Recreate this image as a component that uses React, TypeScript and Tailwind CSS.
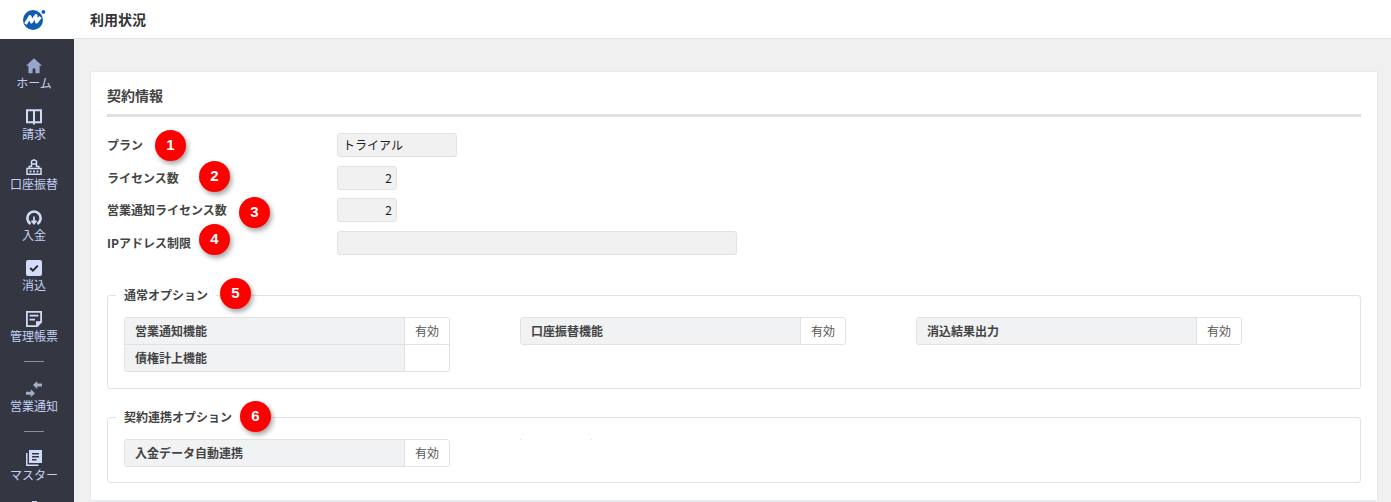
import type { ReactNode } from "react";

const NAV_TOP = [
  {
    label: "ホーム",
    icon: <path fill="#98a6cb" d="M8 0.3 0 7.8h2.4v7.4h4.2v-4.8h2.8v4.8h4.2V7.8H16z" />,
  },
  {
    label: "請求",
    icon: <path fill="none" stroke="#d0dbf8" strokeWidth="2" d="M1 1.2h14v12H1zM8 1.2V15.6" />,
  },
  {
    label: "口座振替",
    icon: (
      <g fill="none" stroke="#d0dbf8" strokeWidth="1.5">
        <path d="M5.5 8V2.2L8 .8l2.5 1.4V8M5.5 4.9h5" />
        <path d="M5.5 7.6H3.2v2M10.5 7.6h2.3v2" />
        <path d="M1 15.2V9.6h14v5.6z" />
        <path strokeWidth="1.8" d="M3.6 12.5h1.8M7.1 12.5h1.8M10.6 12.5h1.8" />
      </g>
    ),
  },
  {
    label: "入金",
    icon: (
      <g fill="none" stroke="#d0dbf8">
        <path strokeWidth="2.6" d="M4.6 13.8A6.6 6.6 0 1 1 11.4 13.8" />
        <path strokeWidth="1.7" d="M8 6.5V12.6M5.6 10.6 8 13.6l2.4-3" />
      </g>
    ),
  },
  {
    label: "消込",
    icon: (
      <>
        <rect width="16" height="16" rx="2" fill="#d3ddfa" />
        <path fill="none" stroke="#232733" strokeWidth="2" d="m4.2 8 2.7 2.6 4.9-5" />
      </>
    ),
  },
  {
    label: "管理帳票",
    icon: (
      <g fill="none" stroke="#d0dbf8" strokeWidth="1.8">
        <path d="M.9.9h14.2v10.2l-4 4H.9z" />
        <path d="M3.6 4.6h8.8M3.6 8.6h5.4" />
        <path fill="#d0dbf8" stroke="none" d="M10 15.5V10.2h5.5z" />
      </g>
    ),
  },
];

function NavItem({ label, icon, height = "h-[50.5px]" }: { label: string; icon: ReactNode; height?: string }) {
  return (
    <div className={`flex flex-col items-center ${height}`}>
      <svg viewBox="0 0 16 16" className="size-4 shrink-0">
        {icon}
      </svg>
      <span className="text-xs leading-[17px] whitespace-nowrap text-[#c3d0f4]">{label}</span>
    </div>
  );
}

function Pin({ n, className }: { n: number; className: string }) {
  return (
    <span
      className={`absolute flex size-[31px] items-center justify-center rounded-full bg-[#fe0000] font-['Liberation_Sans',sans-serif] text-[15px] font-bold text-white shadow-[2px_3px_5px_rgba(0,0,0,0.35)] ${className}`}
    >
      {n}
    </span>
  );
}

function FormRow({ label, width, value, right, className, pin }: {
  label: string;
  width: string;
  value?: string;
  right?: boolean;
  className: string;
  pin: ReactNode;
}) {
  return (
    <div className={`relative flex items-center ${className}`}>
      <label className="w-[230px] text-xs font-bold text-[#444]">{label}</label>
      <div
        className={`flex h-6 items-center rounded-[3px] border border-[#e2e2e2] bg-[#f1f1f1] text-xs text-[#222] ${width} ${right ? "justify-end pr-1" : "pl-[5px]"}`}
      >
        {value}
      </div>
      {pin}
    </div>
  );
}

function OptionTable({ rows }: { rows: [string, string][] }) {
  return (
    <div className="w-[326px] overflow-hidden rounded-[3px] border border-[#e2e2e2]">
      {rows.map(([name, state], i) => (
        <div key={name} className={`flex ${i > 0 ? "h-[27px] border-t border-[#e2e2e2]" : "h-[26px]"}`}>
          <div className="flex flex-1 items-center border-r border-[#e2e2e2] bg-[#f1f2f4] pl-[10px] text-xs font-bold text-[#444]">
            {name}
          </div>
          <div className="flex w-[44px] items-center justify-center text-xs text-[#555]">{state}</div>
        </div>
      ))}
    </div>
  );
}

export default function App() {
  return (
    <div className="flex h-[502px] overflow-hidden bg-[#f0f0f0] font-['Noto_Sans_CJK_JP','Noto_Sans',sans-serif]">
      <aside className="flex w-[74px] shrink-0 flex-col">
        <div className="flex h-[39px] shrink-0 items-center justify-center bg-white pr-[6px]">
          <svg viewBox="0 0 24 20" className="h-5 w-6">
            <circle cx="11" cy="10" r="10" fill="#0f5cb4" />
            <circle cx="21.4" cy="1.9" r="1.9" fill="#0f5cb4" />
            <path
              fill="none"
              stroke="#fff"
              strokeWidth="3"
              strokeLinejoin="round"
              d="M3.5 14 8 6.5 9.5 12 14 5.5l.5 6.5 4-5"
            />
          </svg>
        </div>
        <nav className="flex flex-1 flex-col items-center bg-[#343741] pt-[19px] pr-[6px]">
          {NAV_TOP.map((item) => (
            <NavItem key={item.label} label={item.label} icon={item.icon} />
          ))}
          <div className="mb-[19px] h-px w-5 bg-[#8a8f9c]" />
          <NavItem
            label="営業通知"
            height="h-[50px]"
            icon={
              <g fill="#a3aec9">
                <path d="M16 2.5h-4.8V0L7 4l4.2 4V5.5H16z" />
                <path d="M0 10.8h4.8V8.2L9 12.2l-4.2 4v-2.5H0z" />
              </g>
            }
          />
          <div className="mb-[18px] h-px w-5 bg-[#8a8f9c]" />
          <NavItem
            label="マスター"
            icon={
              <g>
                <path fill="none" stroke="#d0dbf8" strokeWidth="1.5" d="M.8 3v12.2h11.6" />
                <path
                  fill="#d0dbf8"
                  fillRule="evenodd"
                  d="M3 0h13v13H3zM6 3v1.6h7V3zM6 6v1.6h7V6zM6 9v1.6h4.5V9z"
                />
              </g>
            }
          />
          <div className="h-2 w-[5px] bg-[#c5d2f5]" />
        </nav>
      </aside>

      <div className="flex min-w-0 flex-1 flex-col">
        <header className="flex h-[39px] shrink-0 items-center border-b border-[#e4e4e4] bg-white pl-4 text-sm font-bold text-[#333]">
          利用状況
        </header>
        <main className="pt-[32px] pr-[13px] pl-4">
          <section className="h-[430px] rounded-[2px] border border-[#e6e9f2] bg-white px-4 pt-[13px]">
            <h2 className="h-[32px] border-b-[3px] border-[#e0e0e0] pb-[9px] text-sm leading-[21px] font-bold text-[#444]">
              契約情報
            </h2>
            <FormRow
              label="プラン"
              width="w-[120px]"
              value="トライアル"
              className="mt-[16px]"
              pin={<Pin n={1} className="top-[-3px] left-[48px]" />}
            />
            <FormRow
              label="ライセンス数"
              width="w-[60px]"
              value="2"
              right
              className="mt-[9px]"
              pin={<Pin n={2} className="top-[-5px] left-[92px]" />}
            />
            <FormRow
              label="営業通知ライセンス数"
              width="w-[60px]"
              value="2"
              right
              className="mt-[8px]"
              pin={<Pin n={3} className="top-[-1px] left-[132px]" />}
            />
            <FormRow
              label="IPアドレス制限"
              width="w-[400px]"
              className="mt-[9px]"
              pin={<Pin n={4} className="top-[-7px] left-[92px]" />}
            />

            <fieldset className="relative mt-[30px] h-[104px] rounded-[3px] border border-[#e2e2e2] px-4">
              <legend className="ml-[-8px] px-[8px] text-xs leading-5 font-bold text-[#444]">通常オプション</legend>
              <Pin n={5} className="top-[-27px] left-[112px]" />
              <div className="mt-[12px] flex gap-[70px]">
                <OptionTable
                  rows={[
                    ["営業通知機能", "有効"],
                    ["債権計上機能", ""],
                  ]}
                />
                <div>
                  <OptionTable rows={[["口座振替機能", "有効"]]} />
                </div>
                <div>
                  <OptionTable rows={[["消込結果出力", "有効"]]} />
                </div>
              </div>
            </fieldset>

            <fieldset className="relative mt-[18px] h-[76px] rounded-[3px] border border-[#e2e2e2] px-4">
              <legend className="ml-[-8px] px-[8px] text-xs leading-5 font-bold text-[#444]">契約連携オプション</legend>
              <Pin n={6} className="top-[-26px] left-[132px]" />
              <div className="mt-[12px] flex gap-[70px]">
                <OptionTable rows={[["入金データ自動連携", "有効"]]} />
                <div className="flex h-px w-[72px] justify-between">
                  <span className="size-px bg-[#e2e2e2]" />
                  <span className="size-px bg-[#e2e2e2]" />
                </div>
              </div>
            </fieldset>
          </section>
        </main>
      </div>
    </div>
  );
}
